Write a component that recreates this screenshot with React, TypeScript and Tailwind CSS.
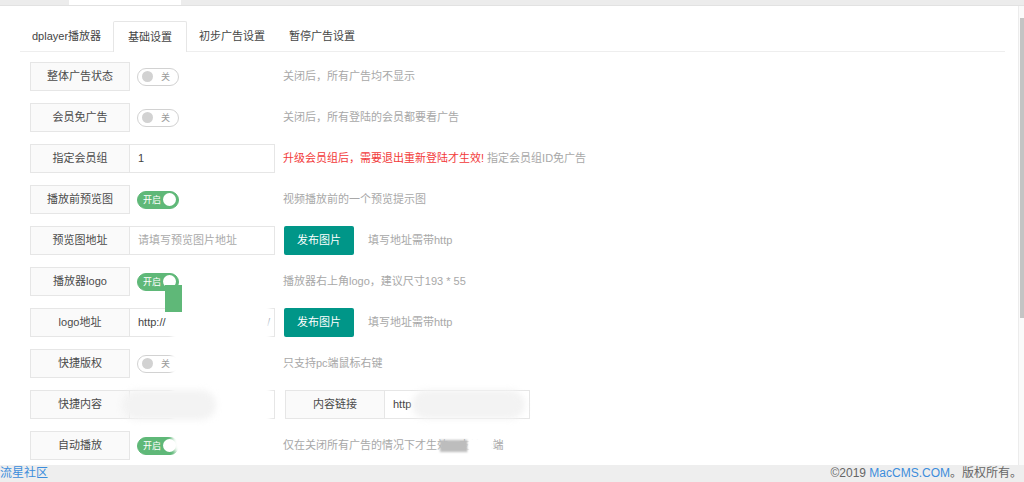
import React from "react"

const font = "font-['Liberation_Sans','Noto_Sans_CJK_SC',sans-serif]"

function Label({ children }: { children: React.ReactNode }) {
  return (
    <div className="w-[100px] h-full shrink-0 flex items-center justify-center border border-[#e6e6e6] bg-[#fafafa] text-[11px] text-[#4a4a4a]">
      {children}
    </div>
  )
}

function Input({ value, placeholder }: { value?: string; placeholder?: string }) {
  return (
    <div className="w-[145px] h-full shrink-0 flex items-center border border-l-0 border-[#e6e6e6] bg-white px-[8px] text-[11px]">
      {value ? <span className="text-[#444]">{value}</span> : <span className="text-[#aaa]">{placeholder}</span>}
    </div>
  )
}

function Switch({ on }: { on: boolean }) {
  return (
    <div className="w-[145px] h-full shrink-0 flex items-center pl-[7px]">
      {on ? (
        <div className="relative w-[42px] h-[18px] rounded-full bg-[#5fb878] border border-[#5fb878]">
          <span className="absolute left-[5px] top-[1px] text-[9px] leading-[14px] text-white">开启</span>
          <span className="absolute right-[2px] top-[1.5px] w-[13px] h-[13px] rounded-full bg-white" />
        </div>
      ) : (
        <div className="relative w-[42px] h-[18px] rounded-full bg-white border border-[#d2d2d2]">
          <span className="absolute left-[4px] top-[2.5px] w-[11px] h-[11px] rounded-full bg-[#d2d2d2]" />
          <span className="absolute left-[23px] top-[1px] text-[9px] leading-[14px] text-[#999]">关</span>
        </div>
      )}
    </div>
  )
}

function Help({ children, className = "ml-[8px]" }: { children: React.ReactNode; className?: string }) {
  return <div className={`${className} text-[11px] text-[#a8a8a8] whitespace-nowrap`}>{children}</div>
}

function Button() {
  return (
    <div className="ml-[9px] w-[70px] h-full shrink-0 flex items-center justify-center bg-[#009688] text-white text-[11px] rounded-[2px]">
      发布图片
    </div>
  )
}

function Row({ children }: { children: React.ReactNode }) {
  return <div className="flex items-center h-[29px] mb-[12px]">{children}</div>
}

const tabs = ["dplayer播放器", "基础设置", "初步广告设置", "暂停广告设置"]

export default function App() {
  return (
    <div className={`relative w-[1024px] h-[482px] overflow-hidden flex flex-col bg-white ${font}`}>
      {/* outer frame strip */}
      <div className="h-[6px] shrink-0 flex bg-[#ececec] border-b border-[#e2e2e2]">
        <div className="ml-[69px] w-[112px] bg-white" />
      </div>

      <div className="relative flex-1 overflow-hidden">
        <div className="pl-[20px] pr-[19px] pt-[15px]">
          <div className="flex h-[31px] border-b border-[#eeeeee]">
            {tabs.map((t, i) => (
              <div
                key={t}
                className={
                  i === 1
                    ? "h-[31px] px-[14px] flex items-center text-[11px] text-[#444] bg-white border border-b-0 border-[#e6e6e6] rounded-t-[2px] -mb-px"
                    : "h-[31px] px-[12px] flex items-center text-[11px] text-[#444]"
                }
              >
                {t}
              </div>
            ))}
          </div>

          <div className="pl-[10px] pt-[10px]">
            <Row>
              <Label>整体广告状态</Label>
              <Switch on={false} />
              <Help>关闭后，所有广告均不显示</Help>
            </Row>
            <Row>
              <Label>会员免广告</Label>
              <Switch on={false} />
              <Help>关闭后，所有登陆的会员都要看广告</Help>
            </Row>
            <Row>
              <Label>指定会员组</Label>
              <Input value="1" />
              <div className="ml-[8px] text-[11px] whitespace-nowrap">
                <span className="text-[#f23a3a]">升级会员组后，需要退出重新登陆才生效!</span>
                <span className="text-[#a8a8a8]"> 指定会员组ID免广告</span>
              </div>
            </Row>
            <Row>
              <Label>播放前预览图</Label>
              <Switch on />
              <Help>视频播放前的一个预览提示图</Help>
            </Row>
            <Row>
              <Label>预览图地址</Label>
              <Input placeholder="请填写预览图片地址" />
              <Button />
              <Help className="ml-[14px]">填写地址需带http</Help>
            </Row>
            <Row>
              <Label>播放器logo</Label>
              <Switch on />
              <Help>播放器右上角logo，建议尺寸193 * 55</Help>
            </Row>
            <Row>
              <Label>logo地址</Label>
              <div className="w-[145px] h-full shrink-0 flex items-center justify-between border border-l-0 border-[#e6e6e6] bg-white pl-[8px] pr-[4px] text-[11px] text-[#444]">
                <span>http://</span>
                <span>/</span>
              </div>
              <Button />
              <Help className="ml-[14px]">填写地址需带http</Help>
            </Row>
            <Row>
              <Label>快捷版权</Label>
              <Switch on={false} />
              <Help>只支持pc端鼠标右键</Help>
            </Row>
            <Row>
              <Label>快捷内容</Label>
              <Input value=" " />
              <div className="ml-[10px] h-full flex">
                <Label>内容链接</Label>
                <Input value="http" />
              </div>
            </Row>
            <Row>
              <Label>自动播放</Label>
              <Switch on />
              <Help>仅在关闭所有广告的情况下才生效，支持pc端</Help>
            </Row>
          </div>
        </div>

        {/* scrollbar */}
        <div className="absolute right-0 top-0 bottom-0 w-[6px] bg-[#fafafa] border-l border-[#ececec]">
          <div className="absolute right-0 top-[12px] w-[4px] h-[300px] bg-[#c4c4c4]" />
        </div>
      </div>

      <div className="h-[17px] shrink-0 flex items-center justify-between bg-[#eeeeee] text-[12px] leading-[17px]">
        <span className="text-[#3c8ddc]">流星社区</span>
        <span className="pr-[2px] text-[#666]">
          ©2019 <span className="text-[#3c8ddc]">MacCMS.COM</span>。版权所有。
        </span>
      </div>

      {/* redaction patches */}
      <div className="absolute left-[172px] top-[285px] w-[98px] h-[175px] bg-white rounded-[18px] blur-[2px]" />
      <div className="absolute left-[165px] top-[285px] w-[17px] h-[27px] bg-[#5fb878]" />
      <div className="absolute left-[122px] top-[390px] w-[94px] h-[30px] bg-[#f3f3f3] rounded-full blur-[3px]" />
      <div className="absolute left-[412px] top-[390px] w-[113px] h-[29px] bg-[#f3f3f3] rounded-full blur-[3px]" />
      <div className="absolute left-[440px] top-[440px] w-[28px] h-[12px] bg-[#bdbdbd] blur-[1px]" />
      <div className="absolute left-[468px] top-[438px] w-[25px] h-[16px] bg-white blur-[1px]" />
    </div>
  )
}
